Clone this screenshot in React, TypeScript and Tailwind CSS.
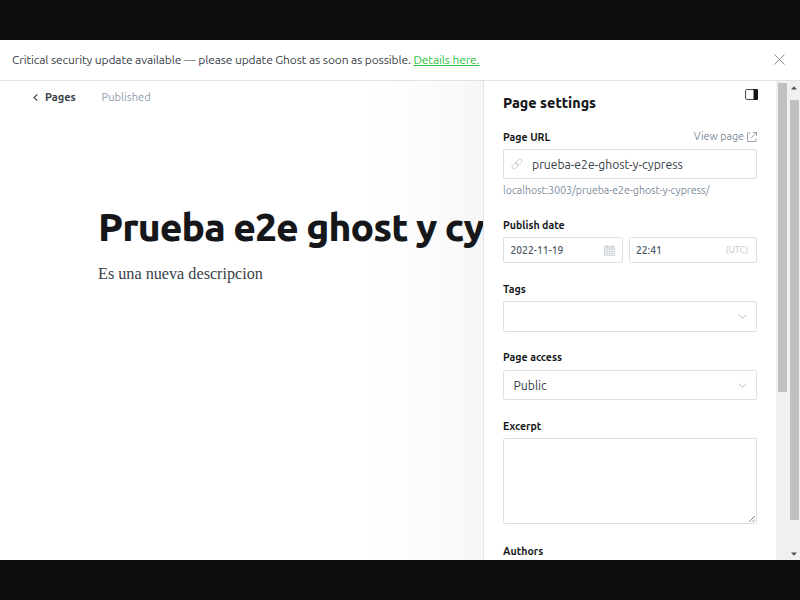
import type { ReactNode } from 'react';

function Label({ children, className = '' }: { children: ReactNode; className?: string }) {
  return (
    <div className={`flex h-3.5 items-center whitespace-nowrap text-[10.6px] leading-none font-bold text-[#15171a] ${className}`}>
      {children}
    </div>
  );
}

function Chevron() {
  return (
    <svg className="h-[5px] w-[9px] shrink-0" viewBox="0 0 9 5" fill="none" stroke="#b4bdc5" strokeWidth="1">
      <path d="M.6 .5 4.5 4.4 8.4 .5" />
    </svg>
  );
}

function CloseIcon() {
  return (
    <svg className="h-[11px] w-[11px]" viewBox="0 0 11 11" fill="none" stroke="#7a8087" strokeWidth=".9">
      <path d="M.5 .5l10 10M10.5 .5l-10 10" />
    </svg>
  );
}

function SidebarIcon() {
  return (
    <svg className="h-[11px] w-[13px]" viewBox="0 0 13 11">
      <rect x=".6" y=".6" width="11.8" height="9.8" rx="1" fill="#fff" stroke="#394047" strokeWidth="1" />
      <path d="M8.5 0H12a1 1 0 0 1 1 1v9a1 1 0 0 1-1 1H8.5z" fill="#15171a" />
    </svg>
  );
}

function ExternalIcon() {
  return (
    <svg className="h-[10px] w-[10px]" viewBox="0 0 10 10" fill="none" stroke="#8e9ba7" strokeWidth=".9">
      <path d="M3.5 1H.5v8.5H9V6.5M6 .5h3.5V4M9.5 .5 4 6" />
    </svg>
  );
}

function LinkIcon() {
  return (
    <svg className="h-[12px] w-[12px]" viewBox="0 0 24 24" fill="none" stroke="#c5ccd3" strokeWidth="1.7">
      <g transform="rotate(-45 12 12)">
        <rect x="-.5" y="8" width="14" height="8" rx="4" />
        <rect x="10.5" y="8" width="14" height="8" rx="4" />
      </g>
    </svg>
  );
}

function CalendarIcon() {
  return (
    <svg className="h-[11px] w-[11px]" viewBox="0 0 11 11" fill="none" stroke="#c9d0d6" strokeWidth=".8">
      <path d="M.5 1.5h10v9H.5zM.5 4h10M.5 6.2h10M.5 8.4h10M3 4v6.5M5.5 4v6.5M8 4v6.5" />
      <path d="M.5 2.7h10" strokeWidth="1.8" opacity=".6" />
      <path d="M3 0v2.5M8 0v2.5" strokeWidth="1.2" />
    </svg>
  );
}

const box = 'rounded-[2px] border border-[#dde1e5] bg-white';

export default function App() {
  return (
    <div className="flex h-[600px] w-[800px] flex-col overflow-hidden bg-[#0e0e0e] py-10 font-['Ubuntu','Noto_Sans',sans-serif]">
      <header className="flex h-[41px] shrink-0 items-center justify-between border-b border-[#e1e3e5] bg-white pr-[15px] pb-0.5 pl-3 text-[12px] whitespace-nowrap text-[#394047]">
        <p className="pt-[2px] tracking-[-0.122px]">
          Critical security update available — please update Ghost as soon as possible.{' '}
          <a className="text-[#30c443] underline">Details here.</a>
        </p>
        <CloseIcon />
      </header>

      <div className="flex min-h-0 flex-1 bg-white">
        <main className="w-[483px] shrink-0 overflow-hidden bg-[linear-gradient(to_right,#ffffff_365px,#fdfdfd_403px,#fbfbfb_435px,#f9f9f9_462px,#f6f6f6_483px)]">
          <nav className="flex h-8 items-center pl-[33px] text-[11px] whitespace-nowrap">
            <svg className="h-[7px] w-[5px]" viewBox="0 0 5 7" fill="none" stroke="#394047" strokeWidth="1.1">
              <path d="M4.3 .4 1 3.5l3.3 3.1" />
            </svg>
            <span className="ml-[7px] w-[56.5px] font-semibold text-[#394047]">Pages</span>
            <span className="text-[11.2px] text-[#8e9cac]">Published</span>
          </nav>
          <h1 className="mt-[86px] ml-[98px] h-[56px] text-[39px] leading-[56px] font-extrabold tracking-[-0.95px] whitespace-nowrap text-[#15171a]">
            Prueba e2e ghost y cypress
          </h1>
          <p className="mt-[7px] ml-[98px] font-['Liberation_Serif',serif] text-[16.2px] leading-[24px] text-[#394047]">
            Es una nueva descripcion
          </p>
        </main>

        <aside className="flex w-[293px] shrink-0 flex-col overflow-hidden border-l border-[#e1e3e5] bg-white pt-2 pr-[19px] pl-[19px]">
          <div className="flex h-[25px] shrink-0 items-start justify-between">
            <h2 className="mt-1 h-[21px] text-[14.3px] leading-[21px] font-extrabold text-[#15171a]">Page settings</h2>
            <div className="-mr-px">
              <SidebarIcon />
            </div>
          </div>
          <div className="mt-4 flex shrink-0 items-center justify-between">
            <Label>Page URL</Label>
            <a className="flex h-3.5 items-center gap-[3px] text-[10.7px] leading-none text-[#7c8b9a]">
              <span className="pb-[2px]">View page</span> <ExternalIcon />
            </a>
          </div>
          <div className={`mt-[5px] flex h-[30px] shrink-0 items-center pl-[7px] ${box}`}>
            <LinkIcon />
            <span className="ml-[9px] pt-[2px] text-[12.2px] text-[#394047]">prueba-e2e-ghost-y-cypress</span>
          </div>
          <p className="mt-1 h-3.5 shrink-0 text-[10.5px] leading-[15px] text-[#7c8b9a]">
            localhost:3003/prueba-e2e-ghost-y-cypress/
          </p>

          <Label className="mt-[21px] shrink-0">Publish date</Label>
          <div className="mt-[5px] flex shrink-0 gap-[6px] text-[10.3px] text-[#4b5a68]">
            <div className={`flex h-[26px] w-[120px] items-center justify-between pr-[7px] pl-[6.5px] ${box}`}>
              <span className="pt-[2px] font-medium">2022-11-19</span>
              <CalendarIcon />
            </div>
            <div className={`flex h-[26px] flex-1 items-center justify-between pr-[8px] pl-[6px] ${box}`}>
              <span className="pt-[2px] font-medium">22:41</span>
              <span className="pt-px text-[9px] text-[#bcc5cc]">(UTC)</span>
            </div>
          </div>

          <Label className="mt-[19px] shrink-0">Tags</Label>
          <div className={`mt-[5px] flex h-[31px] shrink-0 items-center justify-end pr-[9px] ${box}`}>
            <Chevron />
          </div>

          <Label className="mt-[18px] shrink-0">Page access</Label>
          <div className={`mt-1.5 flex h-[30px] shrink-0 items-center justify-between pr-[9px] pl-[9.5px] text-[12.2px] text-[#394047] ${box}`}>
            <span className="pt-[2px]">Public</span>
            <Chevron />
          </div>

          <Label className="mt-[19px] shrink-0">Excerpt</Label>
          <div className={`mt-[5px] flex h-[86px] shrink-0 items-end justify-end p-px ${box}`}>
            <svg className="h-[6px] w-[6px]" viewBox="0 0 6 6" stroke="#666" strokeWidth=".8">
              <path d="M0 6 6 0M3.5 6 6 3.5" />
            </svg>
          </div>

          <Label className="mt-5 shrink-0">Authors</Label>
        </aside>

        <div className="w-3 shrink-0 bg-[#f0f0f0] px-[1.5px] pt-[2px]">
          <div className="h-[309px] bg-[#c0c0c0]" />
        </div>
        <div className="flex w-3 shrink-0 flex-col items-center bg-[#f0f0f0] pt-[5px] pb-[4px]">
          <svg className="h-[4px] w-[6px]" viewBox="0 0 6 4" fill="#505050">
            <path d="M0 3.5 3 .3l3 3.2z" />
          </svg>
          <div className="mt-[10px] h-[420px] w-[9px] bg-[#c0c0c0]" />
          <svg className="mt-auto h-[4px] w-[6px]" viewBox="0 0 6 4" fill="#505050">
            <path d="M0 .5h6L3 3.7z" />
          </svg>
        </div>
      </div>
    </div>
  );
}
